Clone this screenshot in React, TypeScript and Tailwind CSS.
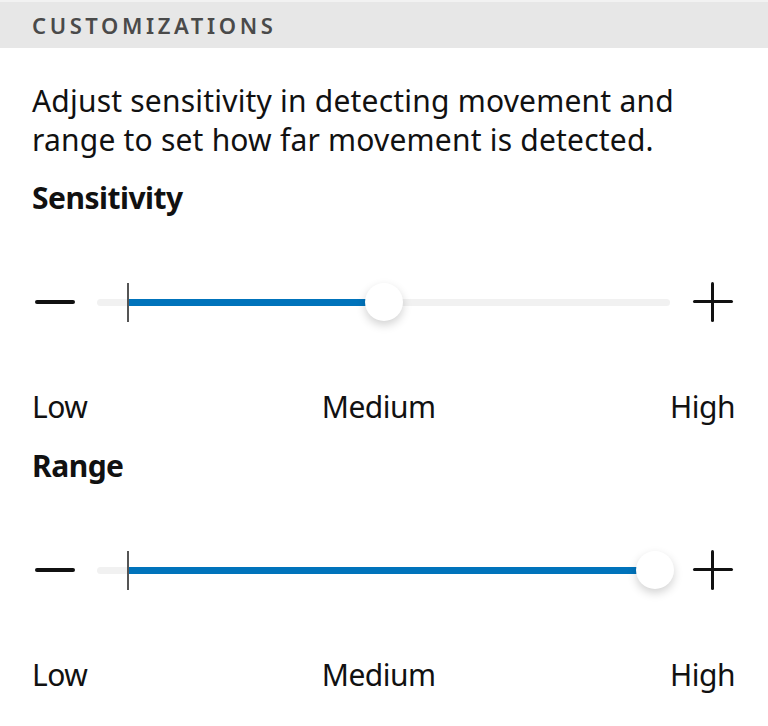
import React from "react";

const font = { fontFamily: '"Noto Sans", "Open Sans", sans-serif' };

function Slider({ fill, thumb }: { fill: number; thumb: number }) {
  return (
    <div className="flex items-center h-[40px] pl-[35px] pr-[35px]">
      <div className="w-[40px] h-[4px] rounded-full bg-[#111]" />
      <div className="relative flex-1 h-[40px] ml-[22px] mr-[23px]">
        <div className="absolute left-0 right-0 top-[17px] h-[7px] bg-[#f1f1f1] rounded-full" />
        <div
          className="absolute top-[17px] h-[7px] bg-[#0073bb] left-[31px]"
          style={{ width: fill - 31 }}
        />
        <div className="absolute left-[30px] top-[1px] w-[2px] h-[39px] bg-[#555]" />
        <div
          className="absolute top-[1px] w-[38px] h-[38px] rounded-full bg-white shadow-[0_4px_10px_rgba(0,0,0,0.18)]"
          style={{ left: thumb - 19 }}
        />
      </div>
      <div className="relative w-[40px] h-[40px]">
        <div className="absolute left-0 right-0 top-[18px] h-[3px] rounded-full bg-[#111]" />
        <div className="absolute top-0 bottom-0 left-[18px] w-[3px] rounded-full bg-[#111]" />
      </div>
    </div>
  );
}

function Labels() {
  return (
    <div className="flex justify-between pl-[32px] pr-[33px] text-[30px] leading-[38px] tracking-[-0.5px] text-[#111]">
      <span>Low</span>
      <span>Medium</span>
      <span>High</span>
    </div>
  );
}

export default function App() {
  return (
    <div className="w-[768px] h-[726px] bg-white overflow-hidden" style={font}>
      <div className="h-[48px] bg-[#e7e7e7] border-t-[2px] border-[#f2f2f2] flex items-center pl-[32px]">
        <span className="text-[22px] font-semibold tracking-[3.6px] text-[#4a4a4a]">
          CUSTOMIZATIONS
        </span>
      </div>
      <p className="mt-[33px] pl-[32px] pr-[60px] text-[30px] leading-[39px] text-[#111] tracking-[0.2px]">
        Adjust sensitivity in detecting movement and range to set how far movement is detected.
      </p>
      <div className="mt-[20px] pl-[32px] text-[30px] leading-[38px] font-bold tracking-[-0.5px] text-[#111]">
        Sensitivity
      </div>
      <div className="mt-[65px]">
        <Slider fill={286} thumb={287} />
      </div>
      <div className="mt-[66px]">
        <Labels />
      </div>
      <div className="mt-[21px] pl-[32px] text-[30px] leading-[38px] font-bold tracking-[-0.5px] text-[#111]">
        Range
      </div>
      <div className="mt-[65px]">
        <Slider fill={542} thumb={558} />
      </div>
      <div className="mt-[66px]">
        <Labels />
      </div>
    </div>
  );
}
